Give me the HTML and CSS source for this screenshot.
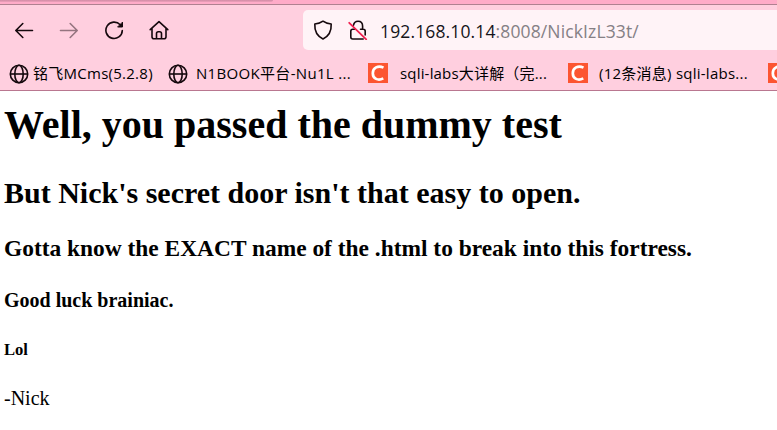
FILE: index.html
```html
<!DOCTYPE html>
<html lang="en">
<head>
<meta charset="utf-8">
<title>NickIzL33t</title>
<link rel="stylesheet" href="styles.css">
</head>
<body>
<header class="chrome">
  <div class="tabstrip"><div class="tab-edge"></div></div>
  <div class="toolbar">
    <nav class="nav">
      <svg class="icon" viewBox="0 0 20 20"><path d="M18.5 10.5H2M8.8 3.5L1.8 10.5l7 7"/></svg>
      <svg class="icon disabled" viewBox="0 0 20 20"><path d="M1.5 10.5H18M11.2 3.5l7 7-7 7"/></svg>
      <svg class="icon reload" viewBox="0 0 20 20"><path d="M16.2 4.8A8.2 8.2 0 1 0 18.3 10.5"/><path class="solid" d="M18.500 2.500v4.500h-4.500z"/></svg>
      <svg class="icon" viewBox="0 0 20 20"><path d="M1.2 9.6L10 1.6l8.8 8M3 8.5v8.3q0 2 2 2h10q2 0 2-2V8.5M7.5 18.5v-5q0-1.8 1.8-1.8h1.4q1.8 0 1.8 1.8v5"/></svg>
    </nav>
    <div class="urlbar">
      <svg class="icon shield" viewBox="0 0 20 20"><path d="M10 1.2C7.6 3 4.8 3.8 1.8 4c-.4 7.5 2.2 12 8.2 15 6-3 8.600-7.500 8.200-15C15.200 3.800 12.400 3 10 1.200z"/></svg>
      <svg class="icon lock" viewBox="0 0 20 20"><path d="M5.5 5.200C6 2.500 7.500 1.200 10 1.200c3 0 4.600 1.900 4.600 4.800v3.200M12.500 9.200h2.700q2 0 2 2v3.800M6.500 9.200H4.800q-2 0-2 2V17q0 2 2 2h10.400"/><path class="strike" d="M1.200 2.800l17 16.500"/></svg>
      <span class="url"><span class="host">192.168.10.14</span>:8008/NickIzL33t/</span>
    </div>
  </div>
  <div class="bookmarks">
    <div class="bookmark first"><svg class="globe" viewBox="0 0 20 20"><circle cx="10" cy="10" r="8.700"/><ellipse cx="10" cy="10" rx="4.200" ry="8.700"/><path d="M1.300 10h17.400"/></svg><span class="label l1">铭飞MCms(5.2.8)</span></div>
    <div class="bookmark second"><svg class="globe" viewBox="0 0 20 20"><circle cx="10" cy="10" r="8.700"/><ellipse cx="10" cy="10" rx="4.200" ry="8.700"/><path d="M1.300 10h17.400"/></svg><span class="label l2">N1BOOK平台-Nu1L ...</span></div>
    <div class="bookmark third"><svg class="csdn" viewBox="0 0 20 20"><path d="M15.500 4.600C10 2 4.800 4.800 4.800 10.200c0 5.600 5.200 7.800 10.500 5.200"/></svg><span class="label l3">sqli-labs大详解（完...</span></div>
    <div class="bookmark fourth"><svg class="csdn" viewBox="0 0 20 20"><path d="M15.500 4.600C10 2 4.800 4.800 4.800 10.200c0 5.600 5.200 7.800 10.500 5.200"/></svg><span class="label l4">(12条消息) sqli-labs...</span></div>
    <div class="bookmark"><svg class="csdn" viewBox="0 0 20 20"><path d="M15.500 4.600C10 2 4.800 4.800 4.800 10.200c0 5.600 5.200 7.800 10.500 5.200"/></svg></div>
  </div>
</header>
<main class="page">
  <h1>Well, you passed the dummy test</h1>
  <h2>But Nick's secret door isn't that easy to open.</h2>
  <h3>Gotta know the EXACT name of the .html to break into this fortress.</h3>
  <h4>Good luck brainiac.</h4>
  <h5>Lol</h5>
  <p>-Nick</p>
</main>
</body>
</html>
```
FILE: styles.css
```css
* { box-sizing: border-box; }
body { margin: 0; width: 777px; height: 430px; overflow: hidden; background: #fff; color: #000; }

.chrome { height: 91px; background: #ffcfdf; border-bottom: 1px solid #b97790; overflow: hidden; font-family: "Open Sans", "Noto Sans CJK SC", sans-serif; }
.tabstrip { height: 5px; background: #ffabc8; border-bottom: 1px solid #b08090; }
.tab-edge { width: 273px; height: 2px; background: linear-gradient(#d08ba5, #efa0bb); border-radius: 0 0 3px 0; }
.toolbar { display: flex; height: 50px; padding-top: 5px; }
.nav { display: flex; width: 303px; padding: 10px 0 0 14px; gap: 25px; }
.icon { display: block; flex: none; width: 20px; height: 20px; fill: none; stroke: #15080d; stroke-width: 1.6; stroke-linecap: round; stroke-linejoin: round; }
.disabled { opacity: .45; }
.solid { fill: #15080d; stroke-width: 1; }
.urlbar { display: flex; flex: 1; height: 40px; padding: 10px 0 0 10px; background: #fff3f7; border-radius: 5px 0 0 5px; }
.lock { margin-left: 15px; }
.lock .strike { stroke: #f0204f; stroke-width: 1.800; }
.url { margin: 0 0 0 12px; font-size: 17.500px; letter-spacing: .13px; line-height: 22px; color: #858085; white-space: nowrap; }
.host { color: #15141a; }

.bookmarks { display: flex; height: 35px; padding: 8px 0 0 9px; }
.bookmark { display: flex; flex: none; height: 20px; }
.first { width: 159px; }
.second { width: 200px; }
.third, .fourth { width: 200px; }
.globe { width: 20px; height: 20px; flex: none; fill: none; stroke: #15080d; stroke-width: 1.6; margin-top: 1px; }
.csdn { width: 20px; height: 20px; flex: none; background: #fc5531; fill: none; stroke: #fff; stroke-width: 2.700; }
.label { font-size: 15px; line-height: 20px; white-space: nowrap; color: #000; }
.l1 { margin-left: 4px; letter-spacing: .26px; }
.l2 { margin-left: 8px; letter-spacing: .32px; }
.l3 { margin-left: 12px; letter-spacing: .18px; }
.l4 { margin-left: 11px; letter-spacing: .25px; }

.page { padding: 11px 0 0 4px; font-family: "Liberation Serif", serif; white-space: nowrap; }
.page > * { margin: 0; }
h1 { font-size: 40px; line-height: 46px; }
.page h2 { margin-top: 28px; font-size: 30px; line-height: 34px; }
.page h3 { margin-top: 25px; font-size: 23.420px; line-height: 26px; }
.page h4 { margin-top: 28px; font-size: 20px; line-height: 22px; }
.page h5 { margin-top: 29px; font-size: 16.600px; line-height: 20px; }
.page p { margin-top: 27px; font-size: 20px; line-height: 22px; }
```
